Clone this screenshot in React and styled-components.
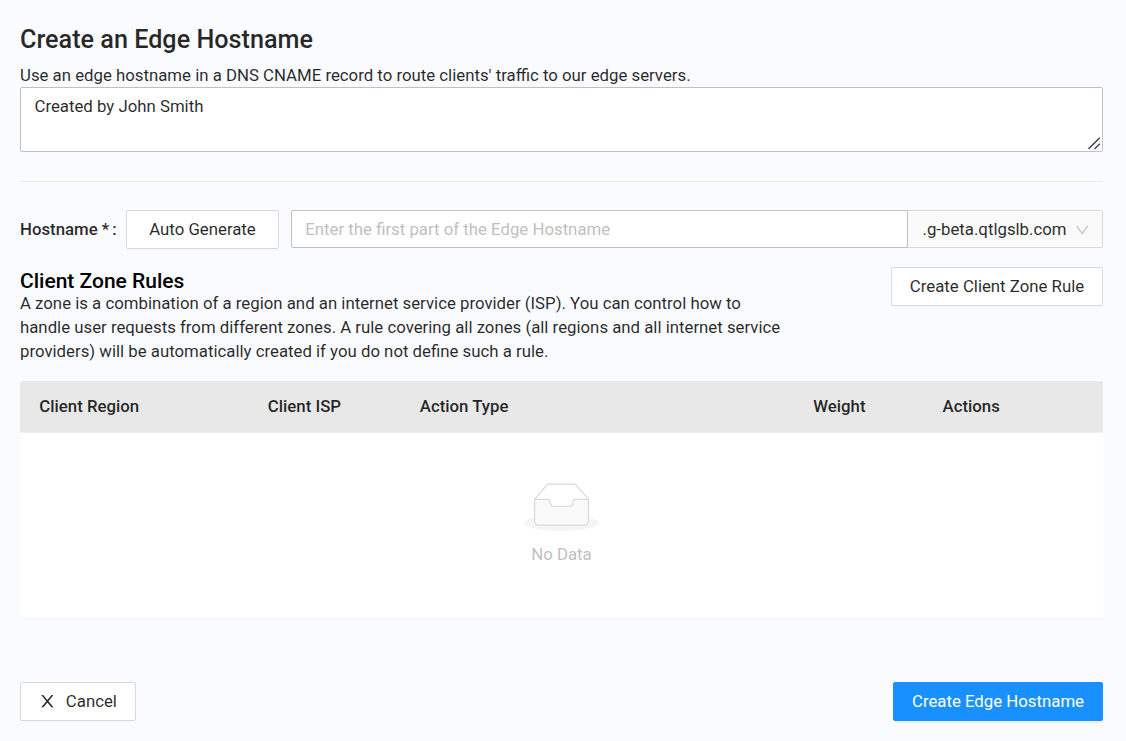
import React from "react";
import styled, { createGlobalStyle } from "styled-components";

const GlobalStyle = createGlobalStyle`
  * { box-sizing: border-box; }
  body {
    margin: 0;
    background: #fafbff;
    color: rgba(0, 0, 0, 0.85);
    font-family: Roboto, "Liberation Sans", sans-serif;
    font-size: 16.8px;
    line-height: 24px;
  }
  button, input, textarea { font: inherit; color: inherit; }
`;

const Page = styled.main`
  display: flex;
  flex-direction: column;
  width: 1126px;
  height: 741px;
  padding: 24px 23px 20px 20px;
`;

const Title = styled.h1`
  margin: 0;
  font-size: 25.2px;
  font-weight: 500;
  line-height: 32px;
`;

const Intro = styled.p`
  margin: 7px 0 0;
`;

const DescriptionField = styled.div`
  position: relative;
`;

const Description = styled.textarea`
  display: block;
  width: 100%;
  height: 65px;
  padding: 6px 13.5px;
  border: 1px solid #bfc0c3;
  border-radius: 2px;
  background: #fff;
  outline: none;
  resize: none;
`;

const ResizeGrip = styled.svg`
  position: absolute;
  right: 2px;
  bottom: 2px;
  pointer-events: none;
`;

const Divider = styled.hr`
  width: 100%;
  height: 1px;
  margin: 29px 0 28px;
  border: 0;
  background: #e9eaee;
`;

const HostnameRow = styled.div`
  display: flex;
  height: 39px;
  align-items: flex-start;
`;

const Label = styled.label`
  width: 106px;
  line-height: 38px;
  font-weight: 500;
`;

const Colon = styled.span`
  margin-left: 3px;
`;

const Button = styled.button`
  display: flex;
  align-items: center;
  justify-content: center;
  flex: none;
  width: ${(p) => p.$width}px;
  height: 39px;
  padding: 0 0 2px;
  gap: 10px;
  border: 1px solid ${(p) => (p.$primary ? "#1890ff" : "#d9d9d9")};
  border-radius: 2px;
  background: ${(p) => (p.$primary ? "#1890ff" : "#fff")};
  color: ${(p) => (p.$primary ? "#fff" : "inherit")};
  box-shadow: 0 2px 0 rgba(0, 0, 0, ${(p) => (p.$primary ? 0.045 : 0.015)});
`;

const HostInput = styled.input`
  width: 617px;
  height: 38px;
  margin-left: 12px;
  padding: 0 13.3px;
  border: 1px solid #bfc0c3;
  border-radius: 2px 0 0 2px;
  background: #fff;
  outline: none;
  &::placeholder { color: #bfbfbf; opacity: 1; }
`;

const DomainSelect = styled.div`
  display: flex;
  flex: 1;
  height: 38px;
  align-items: center;
  justify-content: space-between;
  padding: 0 13px 0 14.5px;
  border: 1px solid #d9d9d9;
  border-left: 0;
  border-radius: 0 2px 2px 0;
  background: #fafafa;
`;

const RulesHeader = styled.section`
  display: flex;
  align-items: flex-start;
  justify-content: space-between;
  height: 96px;
  margin-top: 18px;
`;

const RulesText = styled.div`
  width: 775px;
`;

const SectionTitle = styled.h2`
  margin: 2px 0 -2px;
  color: #000;
  font-size: 21px;
  font-weight: 500;
  line-height: 24px;
`;

const Paragraph = styled.p`
  margin: 0;
`;

const Table = styled.div`
  margin-top: 18px;
  height: 236px;
  border-radius: 2px;
  background: #fff;
  overflow: hidden;
`;

const HeadRow = styled.div`
  display: grid;
  grid-template-columns: 228.5px 152px 393.5px 129.3px 1fr;
  height: 52px;
  border-bottom: 1px solid #f0f0f0;
  background: #e8e8e8;
`;

const HeadCell = styled.div`
  padding-left: 19.3px;
  font-weight: 500;
  line-height: 51px;
`;

const Empty = styled.div`
  display: flex;
  flex-direction: column;
  align-items: center;
  padding-top: 50px;
  color: #bfbfbf;
`;

const EmptyLabel = styled.div`
  margin-top: 11px;
`;

const Footer = styled.footer`
  display: flex;
  justify-content: space-between;
  margin-top: 65px;
`;

const COLUMNS = ["Client Region", "Client ISP", "Action Type", "Weight", "Actions"];

const DownIcon = () => (
  <svg width="14.4" height="14.4" viewBox="64 0 896 896" fill="#bfbfbf">
    <path d="M884 256h-75c-5.1 0-9.9 2.5-12.9 6.6L512 654.2 227.9 262.6c-3-4.1-7.8-6.6-12.9-6.6h-75c-6.5 0-10.3 7.4-6.5 12.7l352.6 486.1c12.8 17.6 39 17.6 51.7 0l352.6-486.1c3.9-5.3.1-12.7-6.4-12.7z" />
  </svg>
);

const CloseIcon = () => (
  <svg width="16.8" height="16.8" viewBox="64 20 896 896" fill="currentColor">
    <path d="M563.8 512l262.5-312.9c4.4-5.2.7-13.1-6.1-13.1h-79.8c-4.7 0-9.2 2.1-12.3 5.7L511.6 449.8 295.1 191.7c-3-3.6-7.5-5.7-12.3-5.7H203c-6.8 0-10.5 7.9-6.1 13.1L459.4 512 196.9 824.9A7.95 7.95 0 00203 838h79.8c4.7 0 9.2-2.1 12.3-5.7l216.5-258.1 216.5 258.1c3 3.6 7.5 5.7 12.3 5.7h79.8c6.8 0 10.5-7.9 6.1-13.1L563.8 512z" />
  </svg>
);

const InboxDrawing = () => (
  <svg width="75" height="48" viewBox="0 0 64 41">
    <g transform="translate(0 1)" fill="none" fillRule="evenodd">
      <ellipse fill="#f5f5f5" cx="32" cy="33" rx="32" ry="7" />
      <g fillRule="nonzero" stroke="#d9d9d9">
        <path d="M55 12.76L44.854 1.258C44.367.474 43.656 0 42.907 0H21.093c-.749 0-1.46.474-1.947 1.257L9 12.761V22h46v-9.24z" />
        <path d="M41.613 15.931c0-1.605.994-2.93 2.227-2.931H55v18.137C55 33.26 53.68 35 52.05 35h-40.1C10.32 35 9 33.259 9 31.137V13h11.16c1.233 0 2.227 1.323 2.227 2.928v.022c0 1.605 1.005 2.901 2.237 2.901h14.752c1.232 0 2.237-1.308 2.237-2.913v-.007z" fill="#fafafa" />
      </g>
    </g>
  </svg>
);

export default function App() {
  return (
    <>
      <GlobalStyle />
      <Page>
        <Title>Create an Edge Hostname</Title>
        <Intro>Use an edge hostname in a DNS CNAME record to route clients' traffic to our edge servers.</Intro>
        <DescriptionField>
          <Description defaultValue="Created by John Smith" />
          <ResizeGrip width="13" height="13" viewBox="0 0 13 13" stroke="#4d4d4d" strokeWidth="1.6">
            <path d="M0.5 12L11.8 0.7M6.5 12L11.8 6.7" />
          </ResizeGrip>
        </DescriptionField>
        <Divider />
        <HostnameRow>
          <Label htmlFor="host">Hostname *<Colon>:</Colon></Label>
          <Button $width={153}>Auto Generate</Button>
          <HostInput id="host" placeholder="Enter the first part of the Edge Hostname" />
          <DomainSelect>
            .g-beta.qtlgslb.com
            <DownIcon />
          </DomainSelect>
        </HostnameRow>
        <RulesHeader>
          <RulesText>
            <SectionTitle>Client Zone Rules</SectionTitle>
            <Paragraph>
              A zone is a combination of a region and an internet service provider (ISP). You can control how to
              handle user requests from different zones. A rule covering all zones (all regions and all internet
              service providers) will be automatically created if you do not define such a rule.
            </Paragraph>
          </RulesText>
          <Button $width={212}>Create Client Zone Rule</Button>
        </RulesHeader>
        <Table>
          <HeadRow>
            {COLUMNS.map((name) => (
              <HeadCell key={name}>{name}</HeadCell>
            ))}
          </HeadRow>
          <Empty>
            <InboxDrawing />
            <EmptyLabel>No Data</EmptyLabel>
          </Empty>
        </Table>
        <Footer>
          <Button $width={116}>
            <CloseIcon />
            Cancel
          </Button>
          <Button $width={210} $primary>Create Edge Hostname</Button>
        </Footer>
      </Page>
    </>
  );
}
